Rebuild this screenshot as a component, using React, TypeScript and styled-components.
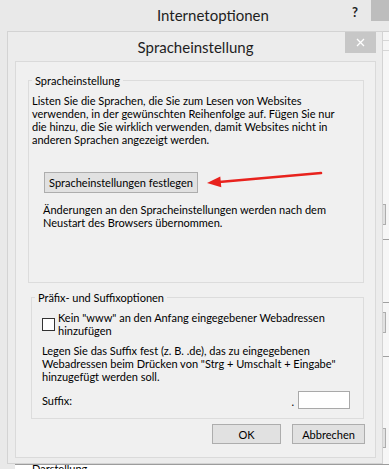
import React from "react";
import styled, { createGlobalStyle } from "styled-components";

const FONT = `Lato, "Liberation Sans", sans-serif`;

const GlobalStyle = createGlobalStyle`
  html, body { margin: 0; padding: 0; background: #e9e9e9; }
  body { font-family: ${FONT}; }
`;

const Screen = styled.div`
  position: relative;
  width: 389px;
  height: 469px;
  overflow: hidden;
  display: flex;
  flex-direction: column;
  background: #e9e9e9;
  font-family: ${FONT};
  font-size: 11px;
  line-height: 13px;
  color: #000;
`;

const OuterTitleBar = styled.div`
  height: 31px;
  flex: none;
  display: flex;
  align-items: flex-start;
`;

const OuterTitle = styled.div`
  padding-left: 157px;
  padding-top: 6px;
  font-size: 15px;
  line-height: 18px;
  color: #1e1e1e;
`;

const HelpMark = styled.div`
  margin-left: auto;
  margin-top: 4px;
  margin-right: 13px;
  font-size: 13px;
  font-weight: 700;
  line-height: 16px;
  color: #222;
`;

const OuterClose = styled.div`
  width: 18px;
  height: 21px;
  background: #bdbdbd;
`;

const MainRow = styled.div`
  display: flex;
  height: 433px;
  flex: none;
`;

const LeftGutter = styled.div`
  width: 7px;
  flex: none;
`;

const Dialog = styled.div`
  width: 376px;
  box-sizing: border-box;
  flex: none;
  border: 1px solid #d3d3d3;
  background: #ececec;
  display: flex;
  flex-direction: column;
  padding: 0 6px 5px 7px;
`;

const DialogTitleBar = styled.div`
  height: 29px;
  flex: none;
  display: grid;
  grid-template-columns: 31px 1fr 31px;
  align-items: center;
`;

const DialogTitle = styled.div`
  grid-column: 2;
  text-align: center;
  font-size: 15px;
  line-height: 18px;
  color: #1e1e1e;
`;

const DialogClose = styled.div`
  grid-column: 3;
  align-self: start;
  height: 21px;
  background: #c7c7c7;
  display: flex;
  align-items: center;
  justify-content: center;
`;

const Panel = styled.div`
  flex: 1;
  min-height: 0;
  border: 1px solid #dadada;
  background: #f0f0f0;
  display: flex;
  flex-direction: column;
`;

const GroupBox = styled.fieldset<{ $top: number; $left: number; $bottom: number }>`
  margin: ${(p) => p.$top}px 11px 0 ${(p) => p.$left}px;
  padding: 7px 3px ${(p) => p.$bottom}px 3px;
  border: 1px solid #dcdcdc;
  min-width: 0;
  display: flex;
  flex-direction: column;
  align-items: flex-start;
`;

const Legend = styled.legend`
  padding: 0 3px;
  font-size: 11px;
  line-height: 13px;
  color: #000;
`;

const Para = styled.div<{ $indent?: number; $top?: number }>`
  margin-left: ${(p) => p.$indent ?? 0}px;
  margin-top: ${(p) => p.$top ?? 0}px;
`;

const Line = styled.span`
  display: block;
  white-space: nowrap;
`;

const WinButton = styled.button<{ $w: number; $h: number }>`
  width: ${(p) => p.$w}px;
  height: ${(p) => p.$h}px;
  box-sizing: border-box;
  margin: 0;
  padding: 0;
  border: 1px solid #adadad;
  background: #e1e1e1;
  font-family: ${FONT};
  font-size: 11px;
  line-height: 13px;
  color: #000;
  white-space: nowrap;
`;

const SetButton = styled(WinButton)`
  margin-top: 26px;
  margin-left: 12px;
`;

const GroupBody = styled.div`
  align-self: stretch;
  padding: 0 10px 0 7px;
  display: flex;
  flex-direction: column;
`;

const CheckRow = styled.label`
  display: flex;
  align-items: center;
  gap: 3px;
`;

const CheckBox = styled.span`
  width: 13px;
  height: 13px;
  box-sizing: border-box;
  border: 1px solid #333;
  background: #fff;
  flex: none;
`;

const SuffixRow = styled.div`
  margin-top: 8px;
  display: flex;
  align-items: center;
  height: 18px;
`;

const Dot = styled.span`
  margin-left: auto;
  margin-right: 4px;
  align-self: flex-end;
  line-height: 13px;
  margin-bottom: 1px;
`;

const SuffixInput = styled.div`
  width: 52px;
  height: 18px;
  box-sizing: border-box;
  border: 1px solid #a9a9a9;
  background: #fff;
`;

const ButtonRow = styled.div`
  margin-top: 5px;
  margin-right: 10px;
  display: flex;
  justify-content: flex-end;
  gap: 11px;
`;

const RightStrip = styled.div`
  flex: 1;
  border-top: 1px solid #d0d0d0;
  background: #f6f6f6;
  display: flex;
  flex-direction: column;
  align-items: flex-start;
`;

const StripLine = styled.div<{ $gap: number; $tone: string }>`
  margin-top: ${(p) => p.$gap}px;
  height: 1px;
  align-self: stretch;
  background: ${(p) => p.$tone};
`;

const StripButton = styled.div<{ $gap: number; $h: number }>`
  margin-top: ${(p) => p.$gap}px;
  width: 3px;
  height: ${(p) => p.$h}px;
  box-sizing: border-box;
  border: 1px solid #adadad;
  border-left: none;
  background: #e1e1e1;
`;

const BottomStrip = styled.div`
  flex: 1;
  display: flex;
`;

const BottomFill = styled.div`
  width: 15px;
  background: #e9e9e9;
`;

const BottomContent = styled.div`
  flex: 1;
  background: #fff;
  border-top: 1px solid #9c9c9c;
  overflow: hidden;
  padding-left: 17px;
`;

const PeekText = styled.div`
  margin-top: -3px;
  white-space: nowrap;
`;

const ArrowSvg = styled.svg`
  position: absolute;
  left: 200px;
  top: 163px;
  width: 130px;
  height: 28px;
  overflow: visible;
`;

export default function App() {
  return (
    <>
      <GlobalStyle />
      <Screen>
        <OuterTitleBar>
          <OuterTitle>Internetoptionen</OuterTitle>
          <HelpMark>?</HelpMark>
          <OuterClose />
        </OuterTitleBar>
        <MainRow>
          <LeftGutter />
          <Dialog>
            <DialogTitleBar>
              <DialogTitle>Spracheinstellung</DialogTitle>
              <DialogClose>
                <svg width="9" height="9" viewBox="0 0 9 9">
                  <path d="M1 1 L8 8 M8 1 L1 8" stroke="#fff" strokeWidth="1.3" />
                </svg>
              </DialogClose>
            </DialogTitleBar>
            <Panel>
              <GroupBox $top={12} $left={12} $bottom={53}>
                <Legend>Spracheinstellung</Legend>
                <Para>
                  <Line>Listen Sie die Sprachen, die Sie zum Lesen von Websites</Line>
                  <Line>verwenden, in der gewünschten Reihenfolge auf. Fügen Sie nur</Line>
                  <Line>die hinzu, die Sie wirklich verwenden, damit Websites nicht in</Line>
                  <Line>anderen Sprachen angezeigt werden.</Line>
                </Para>
                <SetButton $w={154} $h={21}>Spracheinstellungen festlegen</SetButton>
                <Para $indent={11} $top={10}>
                  <Line>Änderungen an den Spracheinstellungen werden nach dem</Line>
                  <Line>Neustart des Browsers übernommen.</Line>
                </Para>
              </GroupBox>
              <GroupBox $top={8} $left={15} $bottom={9}>
                <Legend>Präfix- und Suffixoptionen</Legend>
                <GroupBody>
                  <CheckRow>
                    <CheckBox />
                    <span>
                      <Line>Kein "www" an den Anfang eingegebener Webadressen</Line>
                      <Line>hinzufügen</Line>
                    </span>
                  </CheckRow>
                  <Para $top={7}>
                    <Line>Legen Sie das Suffix fest (z. B. .de), das zu eingegebenen</Line>
                    <Line>Webadressen beim Drücken von "Strg + Umschalt + Eingabe"</Line>
                    <Line>hinzugefügt werden soll.</Line>
                  </Para>
                  <SuffixRow>
                    <span>Suffix:</span>
                    <Dot>.</Dot>
                    <SuffixInput />
                  </SuffixRow>
                </GroupBody>
              </GroupBox>
              <ButtonRow>
                <WinButton $w={69} $h={20}>OK</WinButton>
                <WinButton $w={73} $h={20}>Abbrechen</WinButton>
              </ButtonRow>
            </Panel>
          </Dialog>
          <RightStrip>
            <StripLine $gap={8} $tone="#d6d6d6" />
            <StripLine $gap={9} $tone="#d6d6d6" />
            <StripButton $gap={153} $h={21} />
            <StripLine $gap={14} $tone="#a0a0a0" />
            <StripLine $gap={62} $tone="#a0a0a0" />
            <StripButton $gap={9} $h={21} />
            <StripLine $gap={23} $tone="#a0a0a0" />
            <StripButton $gap={71} $h={20} />
          </RightStrip>
        </MainRow>
        <BottomStrip>
          <BottomFill />
          <BottomContent>
            <PeekText>Darstellung</PeekText>
          </BottomContent>
        </BottomStrip>
        <ArrowSvg viewBox="0 0 130 28">
          <line x1="19" y1="19" x2="121" y2="10" stroke="#e8221d" strokeWidth="2.6" strokeLinecap="round" />
          <polygon points="7,20 21.3,24.3 20.3,13.6" fill="#e8221d" />
        </ArrowSvg>
      </Screen>
    </>
  );
}
